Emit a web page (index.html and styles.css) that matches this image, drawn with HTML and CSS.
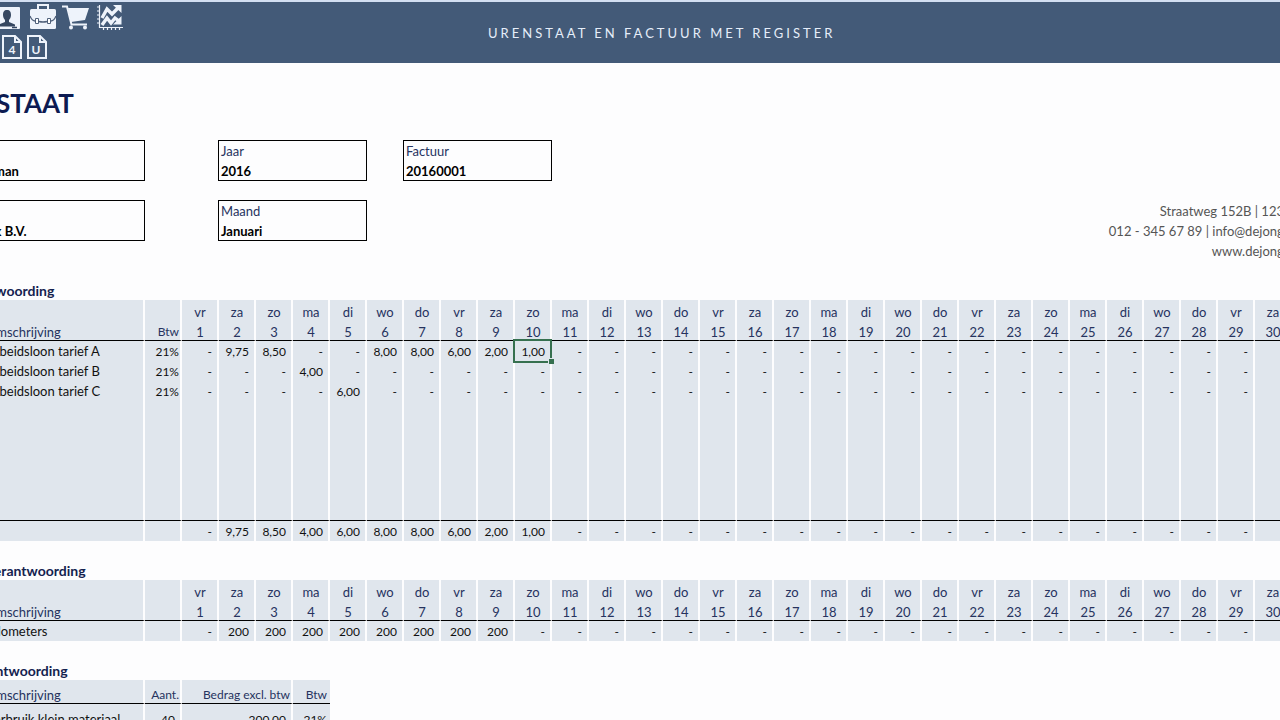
FILE: index.html
```html
<!DOCTYPE html>
<html lang="nl">
<head>
    <meta charset="UTF-8">
    <title>Urenstaat en factuur met register</title>
    <link rel="stylesheet" href="styles.css">
</head>
<body>
<header class="topbar">
    <nav class="tools">
        <div class="tools-row">
            <a href="#" aria-label="Relaties">
                <svg width="31" height="26" viewBox="0 0 31 26">
                    <path d="M1 3h25q1 0 1 1v20q0 1-1 1H1q-1 0-1-1V4q0-1 1-1z" fill="#eef3fb"/>
                    <path d="M14 6c-3 0-4 2-4 5 0 2 1 4 2 5v2l-6 2.500v2h16v-2L16 18v-2c1-1 2-3 2-5 0-3-1-5-4-5z" fill="#354761"/>
                    <path d="M19 23.500h5" stroke="#354761" stroke-width="1.500"/>
                </svg>
            </a>
            <a href="#" aria-label="Projecten">
                <svg width="26" height="26" viewBox="0 0 26 26">
                    <path d="M8 5V1h10v4" fill="none" stroke="#eef3fb" stroke-width="2"/>
                    <rect x="0" y="5" width="26" height="20" rx="1.500" fill="#eef3fb"/>
                    <path d="M0 12q2 5 5 5M9 17.500q4 1 8 0M21 17q3 0 5-5" fill="none" stroke="#50617b" stroke-width="1.300"/>
                    <path d="M5.500 14.500h3v5h-3zM17.500 14.500h3v5h-3z" fill="#fff" stroke="#50617b"/>
                </svg>
            </a>
            <a href="#" aria-label="Inkoop">
                <svg width="28" height="26" viewBox="0 0 28 26">
                    <path d="M0 2.500h5l4.500 18H25" fill="none" stroke="#eef3fb" stroke-width="2"/>
                    <path d="M6 4h21l-4 12-14 2z" fill="#eef3fb"/>
                    <circle cx="9" cy="23.500" r="2" fill="#eef3fb"/>
                    <circle cx="23" cy="23.500" r="2" fill="#eef3fb"/>
                </svg>
            </a>
            <a href="#" aria-label="Grafieken">
                <svg width="27" height="26" viewBox="0 0 27 26">
                    <path d="M3.500 1v22.500H27M1 3h2M1 7h2M1 11h2M1 15h2M1 19h2M7.500 24v2M11.500 24v2M15.500 24v2M19.500 24v2M23.500 24v2" fill="none" stroke="#eef3fb" stroke-width="1.200"/>
                    <path d="M6 14l5-9 5 5 6-6M6 21l5-7 4 5 4-5 4 3" fill="none" stroke="#eef3fb" stroke-width="3.400"/>
                    <path d="M17 1h8.500v8zM25.500 12v8.500H17z" fill="#eef3fb"/>
                </svg>
            </a>
        </div>
        <div class="tools-row pages">
            <a href="#" aria-label="Kwartaal 4">
                <svg width="20" height="24" viewBox="0 0 20 24">
                    <path d="M1 1h12l6 6v16H1zM13 1v6h6" fill="none" stroke="#eef3fb" stroke-width="2"/>
                    <text class="page-mark" x="10" y="19" text-anchor="middle">4</text>
                </svg>
            </a>
            <a href="#" aria-label="Urenstaat">
                <svg width="20" height="24" viewBox="0 0 20 24">
                    <path d="M1 1h12l6 6v16H1zM13 1v6h6" fill="none" stroke="#eef3fb" stroke-width="2"/>
                    <text class="page-mark" x="9" y="19" text-anchor="middle">U</text>
                </svg>
            </a>
        </div>
    </nav>
    <p class="app-title">URENSTAAT EN FACTUUR MET REGISTER</p>
</header>

<main class="sheet">
    <h1>URENSTAAT</h1>

    <section class="info">
        <dl class="fields">
            <div class="field wide"><dt>Naam</dt><dd>Hans Boersman</dd></div>
            <div class="field"><dt>Jaar</dt><dd>2016</dd></div>
            <div class="field"><dt>Factuur</dt><dd>20160001</dd></div>
            <div class="field wide"><dt>Klant</dt><dd>'t Bouwwerk B.V.</dd></div>
            <div class="field"><dt>Maand</dt><dd>Januari</dd></div>
        </dl>
        <address class="contact">
            Straatweg 152B | 1234 AB Ee<br>
            012 - 345 67 89 | info@dejongbouw.nl<br>
            www.dejongbouw.nl
        </address>
    </section>

    <h2>Urenverantwoording</h2>
    <table class="grid" id="uren"></table>

    <h2>Kilometerverantwoording</h2>
    <table class="grid" id="km"></table>

    <h2>Kostenverantwoording</h2>
    <table class="grid costs">
        <colgroup><col class="c-desc"><col class="c-day"><col class="c-amount"><col class="c-day"></colgroup>
        <thead>
            <tr><th class="desc">Omschrijving</th><th class="tight">Aant.</th><th class="tight">Bedrag excl. btw</th><th class="last">Btw</th></tr>
        </thead>
        <tbody>
            <tr><td class="desc">Verbruik klein materiaal</td><td>40</td><td>200,00</td><td class="last">21%</td></tr>
        </tbody>
    </table>
</main>
<script src="script.js"></script>
</body>
</html>
```
FILE: styles.css
```css
body {
    margin: 0;
    background: #fdfdfe;
    color: #111;
    font: 13px/20px Lato, "Liberation Sans", sans-serif;
    overflow: hidden;
}
h1, h2, p, dl, dd {
    margin: 0;
}

/* top bar */
.topbar {
    display: flex;
    align-items: center;
    height: 61px;
    border-top: 2px solid #d3dff2;
    background: #435a78;
}
.tools {
    flex: 0 0 488px;
    padding-bottom: 2px;
}
.tools-row {
    display: flex;
    gap: 6px;
    margin-left: -7px;
}
.tools-row.pages {
    gap: 5px;
    margin: 5px 0 0 2px;
}
.tools-row a, .tools-row svg {
    display: block;
}
.page-mark {
    font-size: 12px;
    font-weight: bold;
    fill: #eef3fb;
}
.app-title {
    color: #e6eefa;
    font-size: 13px;
    letter-spacing: 3px;
    white-space: nowrap;
}

/* sheet, scrolled a little to the right */
.sheet {
    width: 1404px;
    margin-left: -75px;
}
h1 {
    padding: 24px 0 21px;
    color: #0d1b52;
    font-size: 26px;
    line-height: 32px;
}
h2 {
    padding-top: 21px;
    color: #14224f;
    font-size: 14px;
    line-height: 18px;
}
.info {
    display: flex;
    justify-content: space-between;
    align-items: flex-end;
}
.fields {
    display: grid;
    grid-template-columns: 257px 149px 149px;
    gap: 19px 36px;
    margin-bottom: 20px;
}
.field {
    box-sizing: border-box;
    height: 41px;
    padding-left: 2px;
    border: 1px solid #000;
}
.field.wide {
    margin-right: 37px;
}
.field dt {
    color: #26335f;
}
.field dd {
    color: #000;
    font-weight: bold;
}
.contact {
    color: #555;
    font-style: normal;
    text-align: right;
}

/* tables */
.grid {
    width: 1343px;
    margin-left: 61px;
    table-layout: fixed;
    border-collapse: separate;
    border-spacing: 0;
}
.grid.costs {
    width: 344px;
}
.c-desc {
    width: 159px;
}
.c-day {
    width: 37px;
}
.c-amount {
    width: 111px;
}
.grid th, .grid td {
    box-sizing: border-box;
    height: 20px;
    padding: 1px 5px 0 0;
    border-right: 2px solid #fdfdfe;
    background: #e0e6ed;
    font-size: 12px;
    line-height: 17px;
    text-align: right;
    white-space: nowrap;
}
.grid th {
    padding-top: 3px;
    line-height: 16px;
    color: #26335f;
    font-weight: normal;
}
.grid thead tr:first-child th {
    height: 21px;
}
.grid thead tr:last-child th, .grid .line td {
    border-bottom: 1px solid #000;
}
.grid th.day {
    padding-right: 0;
    padding-left: 1px;
    font-size: 13px;
    text-align: center;
}
.grid .desc {
    padding-right: 0;
    font-size: 13px;
    text-align: left;
}
.grid .tight {
    padding-right: 1px;
}
.grid td.selected {
    position: relative;
}
/* cell cursor with fill handle */
.selected::before {
    content: "";
    position: absolute;
    inset: -2px -2px -2px -2px;
    border: 2px solid #36704f;
}
.selected::after {
    content: "";
    position: absolute;
    right: -4px;
    bottom: -3px;
    width: 5px;
    height: 5px;
    border: 1px solid #e0e6ed;
    border-width: 1px 0 0 1px;
    background: #36704f;
}
.grid.costs thead tr:first-child th, .grid.costs td {
    height: 24px;
    vertical-align: bottom;
}
.grid.costs .last {
    padding-right: 3px;
    border-right: 0;
}
```
FILE: script.js
```js
var names = ["vr", "za", "zo", "ma", "di", "wo", "do"];
var days = 31;

function cell(tag, cls, text) {
    return "<" + tag + (cls ? ' class="' + cls + '"' : "") + ">" + text + "</" + tag + ">";
}

function head(btw) {
    var cols = '<colgroup><col class="c-desc"><col class="c-day">';
    var top = cell("th", "desc", "") + cell("th", "", "");
    var bottom = cell("th", "desc", "Omschrijving") + cell("th", "tight", btw);
    for (var i = 0; i < days; i++) {
        cols += '<col class="c-day">';
        top += cell("th", "day", names[i % 7]);
        bottom += cell("th", "day", i + 1);
    }
    return cols + "</colgroup><thead><tr>" + top + "</tr><tr>" + bottom + "</tr></thead>";
}

// values: day number -> text, every other day gets the filler
function row(desc, btw, values, filler, cls, selected) {
    var html = cell("td", "desc", desc) + cell("td", "tight", btw);
    for (var i = 1; i <= days; i++) {
        html += cell("td", i === selected ? "selected" : "", values[i] || filler);
    }
    return '<tr class="' + cls + '">' + html + "</tr>";
}

var uren = head("Btw") + "<tbody>";
uren += row("Arbeidsloon tarief A", "21%", {2: "9,75", 3: "8,50", 6: "8,00", 7: "8,00", 8: "6,00", 9: "2,00", 10: "1,00"}, "-", "", 10);
uren += row("Arbeidsloon tarief B", "21%", {4: "4,00"}, "-", "");
uren += row("Arbeidsloon tarief C", "21%", {5: "6,00"}, "-", "");
for (var r = 0; r < 6; r++) {
    uren += row("", "", {}, "", r === 5 ? "line" : "");
}
uren += row("", "", {2: "9,75", 3: "8,50", 4: "4,00", 5: "6,00", 6: "8,00", 7: "8,00", 8: "6,00", 9: "2,00", 10: "1,00"}, "-", "");
document.getElementById("uren").innerHTML = uren + "</tbody>";

var km = {};
for (var d = 2; d <= 9; d++) {
    km[d] = "200";
}
document.getElementById("km").innerHTML = head("") + "<tbody>" + row("Kilometers", "", km, "-", "") + "</tbody>";
```
